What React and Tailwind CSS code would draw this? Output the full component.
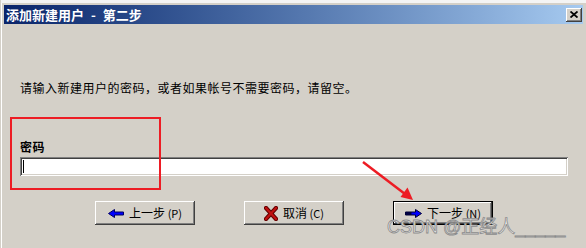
import React from "react";

function LeftArrow() {
  return (
    <svg width="16" height="9" viewBox="0 0 16 9" className="shrink-0">
      <path d="M0.5 4.5 L6.5 0.5 L6.5 3 L15.5 3 L15.5 6 L6.5 6 L6.5 8.5 Z" fill="#0000ff" stroke="#000060" strokeWidth="1" />
    </svg>
  );
}

function RightArrow() {
  return (
    <svg width="17" height="9" viewBox="0 0 17 9" className="shrink-0">
      <path d="M16.5 4.5 L10.5 0.5 L10.5 3 L0.5 3 L0.5 6 L10.5 6 L10.5 8.5 Z" fill="#0000ff" stroke="#000030" strokeWidth="1" />
      <rect x="0.5" y="3" width="6" height="3" fill="#000040" />
    </svg>
  );
}

function RedX() {
  return (
    <svg width="14" height="15" viewBox="0 0 14 15" className="shrink-0">
      <path d="M2 2 L12 13 M12 2 L2 13" stroke="#600000" strokeWidth="4.2" strokeLinecap="square" />
      <path d="M2 2 L12 13 M12 2 L2 13" stroke="#c01010" strokeWidth="2.2" strokeLinecap="square" />
    </svg>
  );
}

function Button({ children, isDefault }) {
  return (
    <div
      className={
        "w-[100px] h-[24px] flex items-center justify-center gap-[5px] bg-[#d4d0c8] text-[12px] text-black " +
        (isDefault
          ? "shadow-[inset_0_0_0_1px_#000000,inset_-2px_-2px_#404040,inset_2px_2px_#ffffff,inset_-3px_-3px_#808080]"
          : "shadow-[inset_-1px_-1px_#404040,inset_1px_1px_#ffffff,inset_-2px_-2px_#808080]")
      }
    >
      {children}
    </div>
  );
}

export default function App() {
  return (
    <div className="relative w-[586px] h-[248px] overflow-hidden bg-[#d4d0c8] font-['Noto_Sans_CJK_SC',sans-serif] pl-[1px]">
      <div className="h-full border-l border-white pl-[2px] pr-[3px] flex flex-col">
        <div className="h-[3px] -ml-[3px] -mr-[3px] bg-[#f4f4f4]" />
        <div className="mt-[2px] h-[19px] flex items-center justify-between bg-gradient-to-r from-[#0a246a] to-[#a6caf0] pl-[2px] pr-[1px]">
          <div className="flex items-center text-white font-bold text-[13px] leading-none whitespace-pre">
            <span>添加新建用户</span>
            <span className="mx-[7px]">-</span>
            <span>第二步</span>
          </div>
          <div className="w-[16px] h-[14px] bg-[#d4d0c8] flex items-center justify-center shadow-[inset_-1px_-1px_#404040,inset_1px_1px_#ffffff,inset_-2px_-2px_#808080]">
            <svg width="8" height="7" viewBox="0 0 8 7">
              <path d="M0.5 0.5 L7.5 6.5 M7.5 0.5 L0.5 6.5" stroke="#000" strokeWidth="1.8" />
            </svg>
          </div>
        </div>
        <div className="pl-[16px] pr-[15px] flex flex-col">
          <div className="mt-[56px] text-[12px] leading-[16px] tracking-[0.5px] text-black">
            请输入新建用户的密码，或者如果帐号不需要密码，请留空。
          </div>
          <div className="mt-[43px] text-[12px] leading-[16px] font-bold text-black tracking-[0.5px]">密码</div>
          <div className="mt-[2px] h-[19px] bg-white pl-[3px] pt-[3px] shadow-[inset_1px_1px_#808080,inset_-1px_-1px_#ffffff,inset_2px_2px_#404040,inset_-2px_-2px_#d4d0c8]">
            <div className="w-[1px] h-[13px] bg-black" />
          </div>
          <div className="mt-[25px] ml-[75px] flex gap-[49px]">
            <Button>
              <LeftArrow />
              <span>上一步 <span className="text-[11px]">(P)</span></span>
            </Button>
            <Button>
              <RedX />
              <span>取消 <span className="text-[11px]">(C)</span></span>
            </Button>
            <Button isDefault>
              <RightArrow />
              <span>下一步 <span className="text-[11px]">(N)</span></span>
            </Button>
          </div>
        </div>
      </div>

      <div className="absolute left-[10px] top-[117px] w-[151px] h-[73px] border-2 border-[#ed1c24]" />

      <svg className="absolute left-0 top-0" width="586" height="248" viewBox="0 0 586 248">
        <line x1="363" y1="162" x2="405" y2="194" stroke="#ed1c24" strokeWidth="2.5" />
        <path d="M413 200 L400.5 197 L407.5 187.5 Z" fill="#ed1c24" />
      </svg>

      <div className="absolute left-[387px] top-[216px] text-[18px] leading-[23px] whitespace-pre text-[#ececec] [-webkit-text-stroke:0.8px_#8a8a8a] font-['Liberation_Sans','Noto_Sans_CJK_SC',sans-serif]">
        CSDN @正经人_____
      </div>
    </div>
  );
}
